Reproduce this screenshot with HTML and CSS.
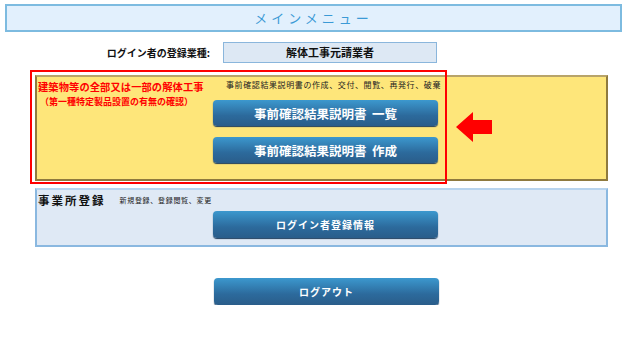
FILE: index.html
```html
<!DOCTYPE html>
<html>
<head>
  <meta charset="utf-8">
  <title>メインメニュー</title>
  <link rel="stylesheet" href="styles.css">
</head>
<body>
  <main class="page">
    <div class="title-bar">メインメニュー</div>

    <div class="login-row">
      <span class="login-label">ログイン者の登録業種:</span>
      <div class="login-value">解体工事元請業者</div>
    </div>

    <section class="panel panel-yellow">
      <div class="panel-left">
        <div class="red-title">建築物等の全部又は一部の解体工事</div>
        <div class="red-sub">（第一種特定製品設置の有無の確認）</div>
      </div>
      <div class="panel-right">
        <div class="note note-yellow">事前確認結果説明書の作成、交付、閲覧、再発行、破棄</div>
        <button class="btn btn-big">事前確認結果説明書&nbsp;&nbsp;一覧</button>
        <button class="btn btn-big">事前確認結果説明書&nbsp;&nbsp;作成</button>
      </div>
      <!-- annotation overlay -->
      <div class="red-frame"></div>
      <svg class="arrow" width="37" height="31" viewBox="0 0 37 31">
        <polygon points="0,15 17,0 17,8 36,8 36,22 17,22 17,30" fill="#ff0000"/>
      </svg>
    </section>

    <section class="panel panel-blue">
      <div class="office-head">
        <span class="office-title">事業所登録</span>
        <span class="note note-blue">新規登録、登録閲覧、変更</span>
      </div>
      <button class="btn btn-small">ログイン者登録情報</button>
    </section>

    <button class="btn btn-small btn-logout">ログアウト</button>
  </main>
</body>
</html>
```

FILE: styles.css
```css
* {
  box-sizing: border-box;
}
body {
  margin: 0;
  background: #fff;
  font-family: "Noto Sans CJK JP", "DejaVu Sans", sans-serif;
  color: #111;
}
.page {
  padding: 4px 0 0 5px;
  width: 622px;
}
.title-bar {
  height: 28px;
  background: #e2f0fd;
  border: 2px solid #7dbbe0;
  color: #3b9ad6;
  font-size: 13px;
  letter-spacing: 4px;
  line-height: 24px;
  text-align: center;
}
.login-row {
  display: flex;
  align-items: center;
  margin-top: 10px;
}
.login-label {
  width: 205px;
  text-align: right;
  font-size: 10px;
  font-weight: bold;
}
.login-value {
  margin-left: 13px;
  width: 214px;
  height: 21px;
  background: #dde8f4;
  border: 1px solid #8ab6dc;
  font-size: 11px;
  font-weight: bold;
  line-height: 19px;
  text-align: center;
}
.panel {
  position: relative;
  margin-left: 30px;
  width: 573px;
}
.panel-yellow {
  display: flex;
  margin-top: 12px;
  height: 106px;
  background: #fee67a;
  border: 2px solid #8f7a3e;
  border-top-color: #b8a46a;
}
.panel-left {
  width: 176px;
  padding: 2px 0 0 1px;
}
.red-title {
  color: #f00;
  font-size: 10.25px;
  font-weight: bold;
  letter-spacing: 0.1px;
  white-space: nowrap;
}
.red-sub {
  color: #f00;
  font-size: 9px;
  font-weight: bold;
  white-space: nowrap;
  margin-top: 1px;
  padding-left: 2px;
}
.panel-right {
  display: flex;
  flex-direction: column;
  gap: 11px;
}
.note {
  color: #222;
  white-space: nowrap;
}
.note-yellow {
  font-size: 8px;
  letter-spacing: 0.6px;
  padding: 2px 0 0 13px;
  margin-bottom: -9px;
  height: 21px;
}
.btn {
  display: block;
  width: 225px;
  padding: 0;
  border: none;
  border-radius: 4px;
  background: linear-gradient(#3c98ce, #2c6a9c 60%, #2a5d8a);
  box-shadow: 0 1px 1px #1f3e5e;
  color: #fff;
  font-family: "Noto Sans CJK JP", "DejaVu Sans", sans-serif;
  font-weight: bold;
  text-align: center;
}
.btn-big {
  height: 26px;
  font-size: 12.5px;
}
.btn-small {
  height: 27px;
  font-size: 10px;
  letter-spacing: 1px;
}
.red-frame {
  position: absolute;
  left: -7px;
  top: -7px;
  width: 417px;
  height: 114px;
  border: 2px solid #f00;
  pointer-events: none;
}
.arrow {
  position: absolute;
  left: 419px;
  top: 35px;
}
.panel-blue {
  margin-top: 7px;
  height: 59px;
  background: #dfe9f5;
  border: 2px solid #8ab8e0;
  border-top-color: #b8d4ee;
}
.office-head {
  display: flex;
  align-items: center;
  padding: 2px 0 0 1px;
}
.office-title {
  font-size: 11.5px;
  font-weight: bold;
  letter-spacing: 2px;
}
.note-blue {
  margin-left: 14px;
  font-size: 7px;
  letter-spacing: 0.7px;
}
.panel-blue .btn {
  margin: 3px 0 0 176px;
}
.btn-logout {
  margin: 31px 0 0 209px;
}
```
